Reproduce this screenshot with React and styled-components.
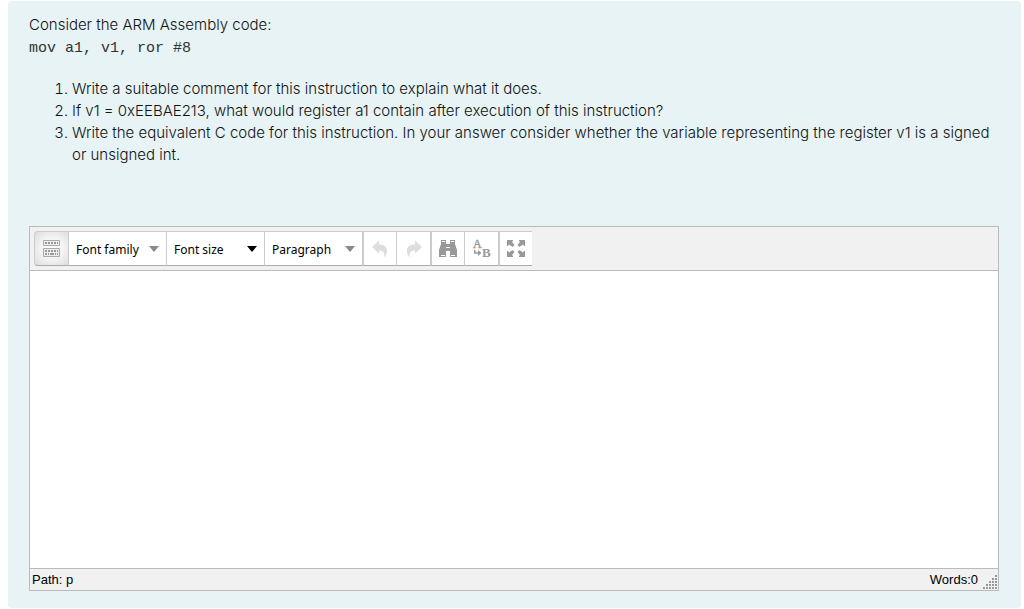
import { useState } from "react"
import styled, { createGlobalStyle } from "styled-components"

const App = () => {
    const [answer, setAnswer] = useState("");
    const words = answer.split(/\s+/).filter(Boolean).length;

  return (
    <>
        <GlobalStyle />
        <QuestionCard>
            <Prompt>Consider the ARM Assembly code:</Prompt>
            <Code>mov a1, v1, ror #8</Code>
            <TaskList>
                <li>Write a suitable comment for this instruction to explain what it does.</li>
                <li>If v1 = 0xEEBAE213, what would register a1 contain after execution of this instruction?</li>
                <li>Write the equivalent C code for this instruction. In your answer consider whether the variable representing the register v1 is a signed or unsigned int.</li>
            </TaskList>
            <Editor>
                <Toolbar>
                    <ToggleButton aria-label="Toolbar toggle"><KitchenSinkIcon /></ToggleButton>
                    <Dropdown label="Font family" color="#888" />
                    <Dropdown label="Font size" color="#000" />
                    <Dropdown label="Paragraph" color="#888" />
                    <ToolButton $start aria-label="Undo" disabled><UndoIcon /></ToolButton>
                    <ToolButton aria-label="Redo" disabled><UndoIcon flip /></ToolButton>
                    <ToolButton $start aria-label="Find"><FindIcon /></ToolButton>
                    <ToolButton aria-label="Find and replace"><ReplaceIcon /></ToolButton>
                    <ToolButton $start aria-label="Full screen"><FullScreenIcon /></ToolButton>
                </Toolbar>
                <TextArea aria-label="Answer" value={answer} onChange={(e) => setAnswer(e.target.value)} />
                <StatusBar>
                    <span>Path: p</span>
                    <WordCount>Words:{words}</WordCount>
                    <ResizeGrip />
                </StatusBar>
            </Editor>
        </QuestionCard>
    </>
  )
}

const Dropdown = ({ label, color }) => (
    <SelectBox>
        <Select aria-label={label}>
            <option>{label}</option>
        </Select>
        <Arrow width="10" height="6" viewBox="0 0 10 6">
            <path d="M0 0h10L5 6z" fill={color} />
        </Arrow>
    </SelectBox>
)

const KitchenSinkIcon = () => (
    <svg width="18" height="18" viewBox="0 0 18 18" fill="none">
        <path d="M.5 .5h16v5H.5zM.5 8.5h16v8H.5z" fill="#eee" stroke="#aaa" />
        <path d="M2 3h2M5 3h2M8 3h2M11 3h2M14 3h1M2 11h2M5 11h2M8 11h2M11 11h2M14 11h1" stroke="#999" strokeWidth="2" />
        <path d="M2 14h2M5 14h1M7 14h4M12 14h1M14 14h1" stroke="#999" strokeWidth="2" />
    </svg>
)

const UndoIcon = ({ flip }) => (
    <svg width="16" height="18" viewBox="0 0 16 18">
        <path transform={flip ? "matrix(-1 0 0 1 16 0)" : undefined} d="M0 7L7 .5V4.500c5 0 8 2 8 6.500 0 3-1 5-3 6 1-5-1-6.500-5-6.500V13.500z" fill="#ddd" />
    </svg>
)

const FindIcon = () => (
    <svg width="18" height="18" viewBox="0 0 18 18">
        <path d="M2 0h5v4h4V0h5v4l2 6v7h-7v-6H7v6H0v-7l2-6z" fill="#999" />
        <path d="M3 1.500h3M12 1.500h3M2 15.500h4M12 15.500h4M7 7.500h4" stroke="#fff" />
    </svg>
)

const ReplaceIcon = () => (
    <svg width="20" height="26" viewBox="0 0 20 26" fill="#999">
        <text x="1" y="12" fontSize="12" fontFamily="Liberation Serif, serif" stroke="#999" strokeWidth=".4">A</text>
        <text x="10" y="21" fontSize="13" fontWeight="700" fontFamily="Liberation Serif, serif">B</text>
        <path d="M2 14h1.500v2.200H6V14l3.500 3L6 20v-2.200H2z" />
    </svg>
)

const FullScreenIcon = () => (
    <svg width="18" height="18" viewBox="0 0 18 18" fill="#999">
        <path d="M0 0h6v1L5 2l2.500 3-2 2L2 4.500 1 6H0zM18 0h-6v1l1 1-2.500 3 2 2L16 4.500 17 6h1zM0 17h6v-1l-1-1 2.500-3-2-2L2 12.500 1 11H0zM18 17h-6v-1l1-1-2.500-3 2-2 3.500 2.500 1-1.500h1z" />
    </svg>
)

const ResizeGrip = () => (
    <svg width="16" height="16" viewBox="0 0 16 16" fill="#999">
        {[0, 1, 2, 3, 4].map((row) => (
            [...Array(row + 1)].map((_, i) => (
                <rect key={`${row}-${i}`} x={13 - i * 3} y={1 + row * 3} width="2" height="2" />
            ))
        ))}
    </svg>
)

const GlobalStyle = createGlobalStyle`
    * {
        box-sizing: border-box;
    }

    body {
        margin: 0;
        background-color: #fff;
    }
`

const QuestionCard = styled.main`
    margin: 1px 3px 0 8px;
    padding: 13px 22px 17px 21px;
    border-radius: 4px;
    background-color: #e7f3f5;
    color: #101214;
    font-family: Inter, sans-serif;
    font-size: 15px;
    font-weight: 300;
    line-height: 22px;
`

const Prompt = styled.p`
    margin: 0;
`

const Code = styled.code`
    display: block;
    margin-top: 2px;
    color: #303336;
    font-family: "Liberation Mono", monospace;
    font-size: 15px;
    font-weight: 400;
`

const TaskList = styled.ol`
    margin: 18px -8px 60px 0;
    padding-left: 43px;
`

const Editor = styled.section`
    display: flex;
    flex-direction: column;
    border: 1px solid #bbb;
    background-color: #fff;
    color: #000;
    font-weight: 400;
`

const Toolbar = styled.div`
    display: flex;
    padding: 4px;
    border-bottom: 1px solid #bbb;
    background-color: #f1f1f1;
`

const ToolButton = styled.button`
    display: flex;
    align-items: center;
    justify-content: center;
    width: 34px;
    height: 35px;
    padding: 0;
    border: 0 solid #ccc;
    border-width: 1px 0 1px ${(props) => (props.$start ? "2px" : "1px")};
    border-bottom-color: #aaa;
    background-color: #fff;
`

const ToggleButton = styled(ToolButton)`
    width: 35px;
    margin-right: -1px;
    border-left-width: 1px;
    border-radius: 4px 0 0 4px;
    background-image: radial-gradient(#fff, #f2f2f2 50%, #ddd);
`

const SelectBox = styled.div`
    display: grid;
    align-items: center;
    width: 98px;
    height: 35px;
    border: 1px solid #ccc;
    border-right: none;
    border-bottom-color: #aaa;
    background-color: #fff;
`

const Select = styled.select`
    grid-area: 1 / 1;
    width: 100%;
    height: 33px;
    padding: 2px 7px 0;
    border: none;
    appearance: none;
    background: none;
    color: #000;
    font-family: "Noto Sans", sans-serif;
    font-size: 12px;
`

const Arrow = styled.svg`
    grid-area: 1 / 1;
    justify-self: end;
    margin-right: 7px;
    pointer-events: none;
`

const TextArea = styled.textarea`
    height: 297px;
    padding: 8px;
    border: none;
    outline: none;
    resize: none;
    font-family: "Liberation Sans", sans-serif;
    font-size: 13px;
`

const StatusBar = styled.div`
    display: flex;
    align-items: flex-end;
    height: 22px;
    padding-left: 2px;
    border-top: 1px solid #bbb;
    background-color: #f1f1f1;
    font-family: "Liberation Sans", sans-serif;
    font-size: 13px;
    line-height: 20px;
`

const WordCount = styled.span`
    margin-left: auto;
    margin-right: 4px;
`

export default App
